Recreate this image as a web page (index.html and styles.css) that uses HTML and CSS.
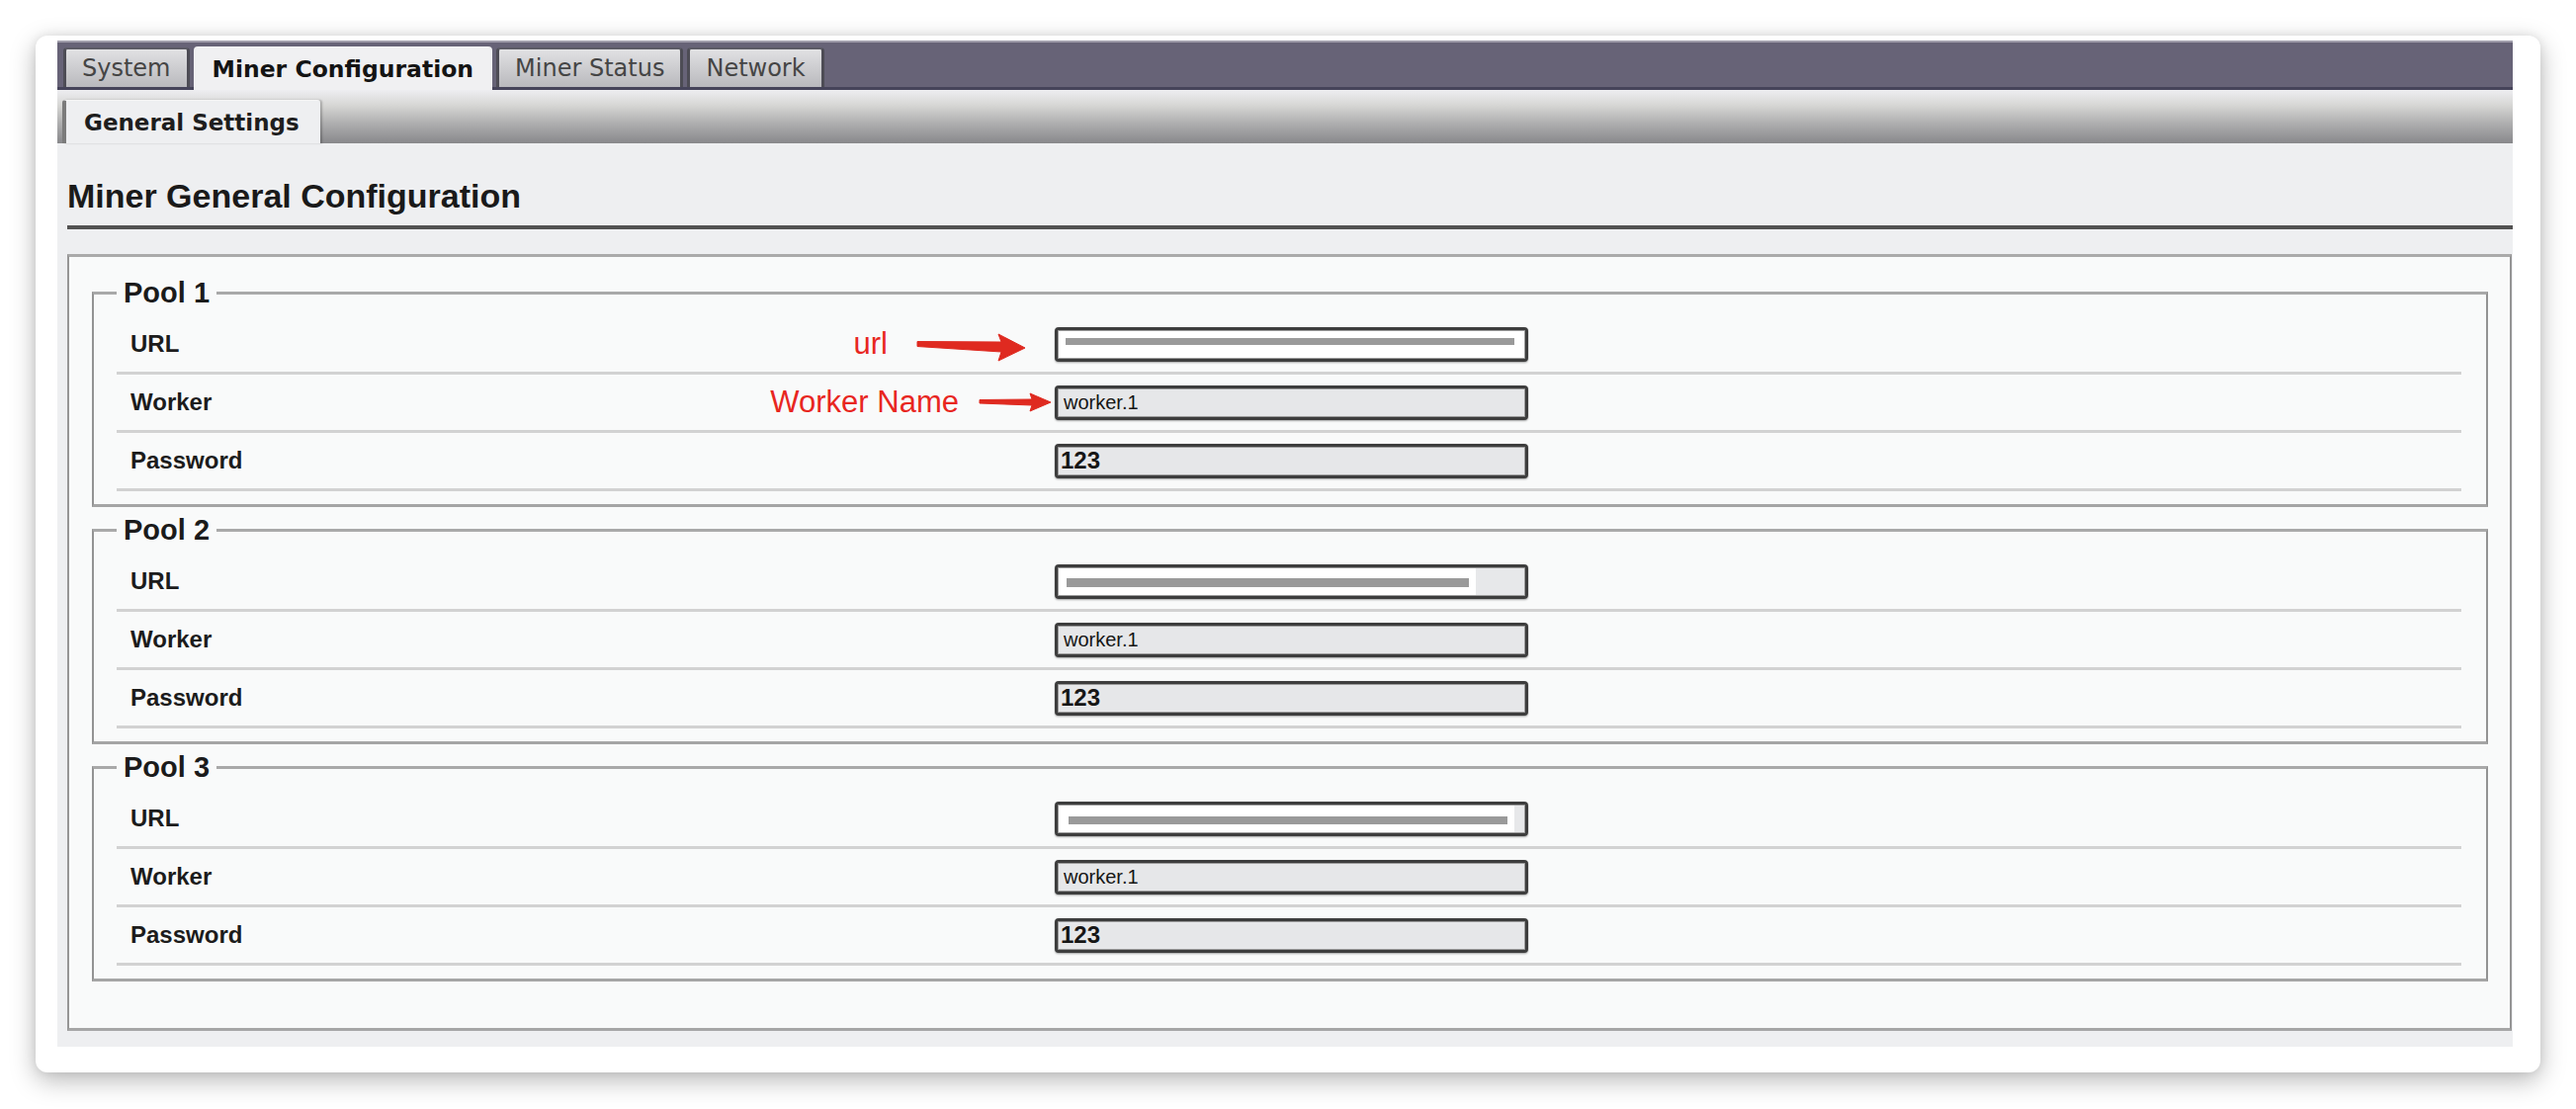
FILE: index.html
```html
<!DOCTYPE html>
<html lang="en">
<head>
<meta charset="utf-8">
<title>Miner Configuration</title>
<link rel="stylesheet" href="styles.css">
</head>
<body>
<div class="card">
  <div class="app">
    <nav class="tabbar">
      <span class="tab">System</span>
      <span class="tab active">Miner Configuration</span>
      <span class="tab">Miner Status</span>
      <span class="tab">Network</span>
    </nav>
    <div class="subbar"><span class="subtab">General Settings</span></div>
    <main class="content">
      <h2 class="title">Miner General Configuration</h2>
      <fieldset class="outer">
        <fieldset class="pool">
          <legend>Pool 1</legend>
          <div class="row">
            <div class="label-cell">
              <span class="label">URL</span>
              <span class="note note-url">
                <span class="note-text">url</span>
                <svg class="arrow-lg" width="111" height="33" viewBox="0 0 111 33"><polygon points="1,10.5 86,11 83,3 110,17 83,30 86,21 1,15.5" fill="#df2a20" stroke="#df2a20" stroke-width="1" stroke-linejoin="round"/></svg>
              </span>
            </div>
            <div class="field url-field bg-white"><span class="redact redact-1"></span></div>
          </div>
          <div class="row">
            <div class="label-cell">
              <span class="label">Worker</span>
              <span class="note note-worker">
                <span class="note-text">Worker Name</span>
                <svg class="arrow-sm" width="74" height="22" viewBox="0 0 74 22"><polygon points="1,8.5 54,8 52,2 73,11 52,20 54,14 1,12" fill="#df2a20" stroke="#df2a20" stroke-width="1" stroke-linejoin="round"/></svg>
              </span>
            </div>
            <div class="field"><span class="worker-text">worker.1</span></div>
          </div>
          <div class="row">
            <div class="label-cell"><span class="label">Password</span></div>
            <div class="field pass"><span class="pass-text">123</span></div>
          </div>
        </fieldset>

        <fieldset class="pool">
          <legend>Pool 2</legend>
          <div class="row">
            <div class="label-cell"><span class="label">URL</span></div>
            <div class="field url-field bg-split-2"><span class="redact redact-2"></span></div>
          </div>
          <div class="row">
            <div class="label-cell"><span class="label">Worker</span></div>
            <div class="field"><span class="worker-text">worker.1</span></div>
          </div>
          <div class="row">
            <div class="label-cell"><span class="label">Password</span></div>
            <div class="field pass"><span class="pass-text">123</span></div>
          </div>
        </fieldset>

        <fieldset class="pool">
          <legend>Pool 3</legend>
          <div class="row">
            <div class="label-cell"><span class="label">URL</span></div>
            <div class="field url-field bg-split-3"><span class="redact redact-3"></span></div>
          </div>
          <div class="row">
            <div class="label-cell"><span class="label">Worker</span></div>
            <div class="field"><span class="worker-text">worker.1</span></div>
          </div>
          <div class="row">
            <div class="label-cell"><span class="label">Password</span></div>
            <div class="field pass"><span class="pass-text">123</span></div>
          </div>
        </fieldset>
      </fieldset>
    </main>
  </div>
</div>
</body>
</html>
```
FILE: styles.css
```css
* { box-sizing: border-box; }

html, body {
  margin: 0;
  background: #ffffff;
}

body {
  padding: 36px;
  font-family: "Liberation Sans", Arial, sans-serif;
}

.card {
  width: 2534px;
  background: #ffffff;
  border-radius: 12px;
  box-shadow: 0 8px 26px rgba(0, 0, 0, 0.28), 0 0 10px rgba(0, 0, 0, 0.08);
  padding: 5px 28px 26px 22px;
}

/* ---------- top tabs ---------- */
.tabbar {
  display: flex;
  align-items: flex-end;
  height: 50px;
  padding-left: 6px;
  background: #676377;
  border-top: 2px solid #a19eac;
  border-bottom: 3px solid #46445a;
}

.tab {
  display: flex;
  align-items: center;
  height: 40px;
  padding: 0 16px;
  margin-right: 4px;
  border: 3px solid #4d4c55;
  border-top: 2px solid #5c5b66;
  border-bottom: 0;
  border-radius: 4px 4px 0 0;
  background: linear-gradient(#e1e1e3, #b9b9bd);
  font-family: "DejaVu Sans", sans-serif;
  font-size: 24px;
  color: #454545;
  white-space: nowrap;
}

.tab.active {
  height: 44px;
  margin-bottom: -3px;
  position: relative;
  border-color: #f0f0f2;
  background: #f0f0f2;
  font-weight: bold;
  font-size: 23.5px;
  color: #141414;
}

/* ---------- sub tabs ---------- */
.subbar {
  display: flex;
  align-items: flex-end;
  height: 54px;
  padding-left: 5px;
  background: linear-gradient(#eeeef1 0%, #d5d5d3 30%, #afafb0 62%, #88888b 100%);
}

.subtab {
  display: flex;
  align-items: center;
  height: 44px;
  padding: 0 21px 0 18px;
  border-left: 4px solid #7b7b7b;
  border-top: 1px solid #f6f6f6;
  border-radius: 3px 3px 0 0;
  background: #eeeff1;
  box-shadow: 2px 0 2px rgba(0, 0, 0, 0.22);
  font-family: "DejaVu Sans", sans-serif;
  font-weight: bold;
  font-size: 23px;
  color: #1e1e1e;
  white-space: nowrap;
}

/* ---------- content ---------- */
.content {
  display: block;
  background: #eeeff1;
  padding: 34px 0 16px 0;
}

.title {
  margin: 0 0 25px 10px;
  padding-bottom: 11px;
  border-bottom: 4px solid #525252;
  font-weight: bold;
  font-size: 34px;
  line-height: 38px;
  color: #1a1a1a;
}

fieldset {
  min-width: 0;
}

.outer {
  margin: 0 1px 0 10px;
  padding: 22px 22px 47px 23px;
  background: #f9fafa;
  border: 2px solid #959595;
  border-top: 3px solid #aaaaaa;
  border-bottom: 3px solid #a6a6a6;
}

.pool {
  margin: 0 0 9px 0;
  padding: 10px 25px 13px 23px;
  border: 2px solid #939393;
  border-top: 3px solid #a9a9a9;
  border-bottom: 3px solid #a5a5a5;
}

.pool:last-child {
  margin-bottom: 0;
}

.pool legend {
  padding: 0 7px;
  font-weight: bold;
  font-size: 29px;
  line-height: 28px;
  color: #1b1b1b;
}

.row {
  display: grid;
  grid-template-columns: 949px 479px 1fr;
  align-items: center;
  height: 59px;
  border-bottom: 3px solid #d2d2d2;
}

.label-cell {
  display: flex;
  align-items: center;
  justify-content: space-between;
  padding-left: 14px;
}

.label {
  font-weight: bold;
  font-size: 24px;
  color: #1c1c1c;
}

/* ---------- red annotations ---------- */
.note {
  display: flex;
  align-items: center;
}

.note-text {
  font-size: 31px;
  color: #e8261f;
  white-space: nowrap;
}

.note-url {
  gap: 29px;
  margin-right: 29px;
}

.note-url .arrow-lg {
  margin-top: 6px;
}

.note-worker {
  gap: 20px;
  margin-right: 3px;
}

.arrow-lg, .arrow-sm {
  display: block;
}

/* ---------- fields ---------- */
.field {
  display: flex;
  align-items: center;
  height: 35px;
  border: 3px solid #3d3d3d;
  border-radius: 4px;
  background: #e6e7e9;
  box-shadow: 0 1px 2px rgba(0, 0, 0, 0.35), inset 0 0 0 1px #9b9b9b;
  padding-left: 6px;
  overflow: hidden;
}

.url-field {
  align-items: flex-start;
  padding-left: 0;
}

.bg-white {
  background: #ffffff;
}

.bg-split-2 {
  background: linear-gradient(to right, #ffffff 0, #ffffff 423px, #e7e8ea 423px);
}

.bg-split-3 {
  background: linear-gradient(to right, #ffffff 0, #ffffff 462px, #e7e8ea 462px);
}

.redact {
  display: block;
  background: #9a9a9a;
}

.redact-1 {
  width: 454px;
  height: 7px;
  margin: 8px 0 0 8px;
}

.redact-2 {
  width: 407px;
  height: 9px;
  margin: 11px 0 0 9px;
}

.redact-3 {
  width: 444px;
  height: 8px;
  margin: 12px 0 0 11px;
}

.worker-text {
  font-size: 20px;
  color: #151515;
}

.pass {
  padding-left: 3px;
}

.pass-text {
  font-weight: bold;
  font-size: 24px;
  color: #161616;
}
```
